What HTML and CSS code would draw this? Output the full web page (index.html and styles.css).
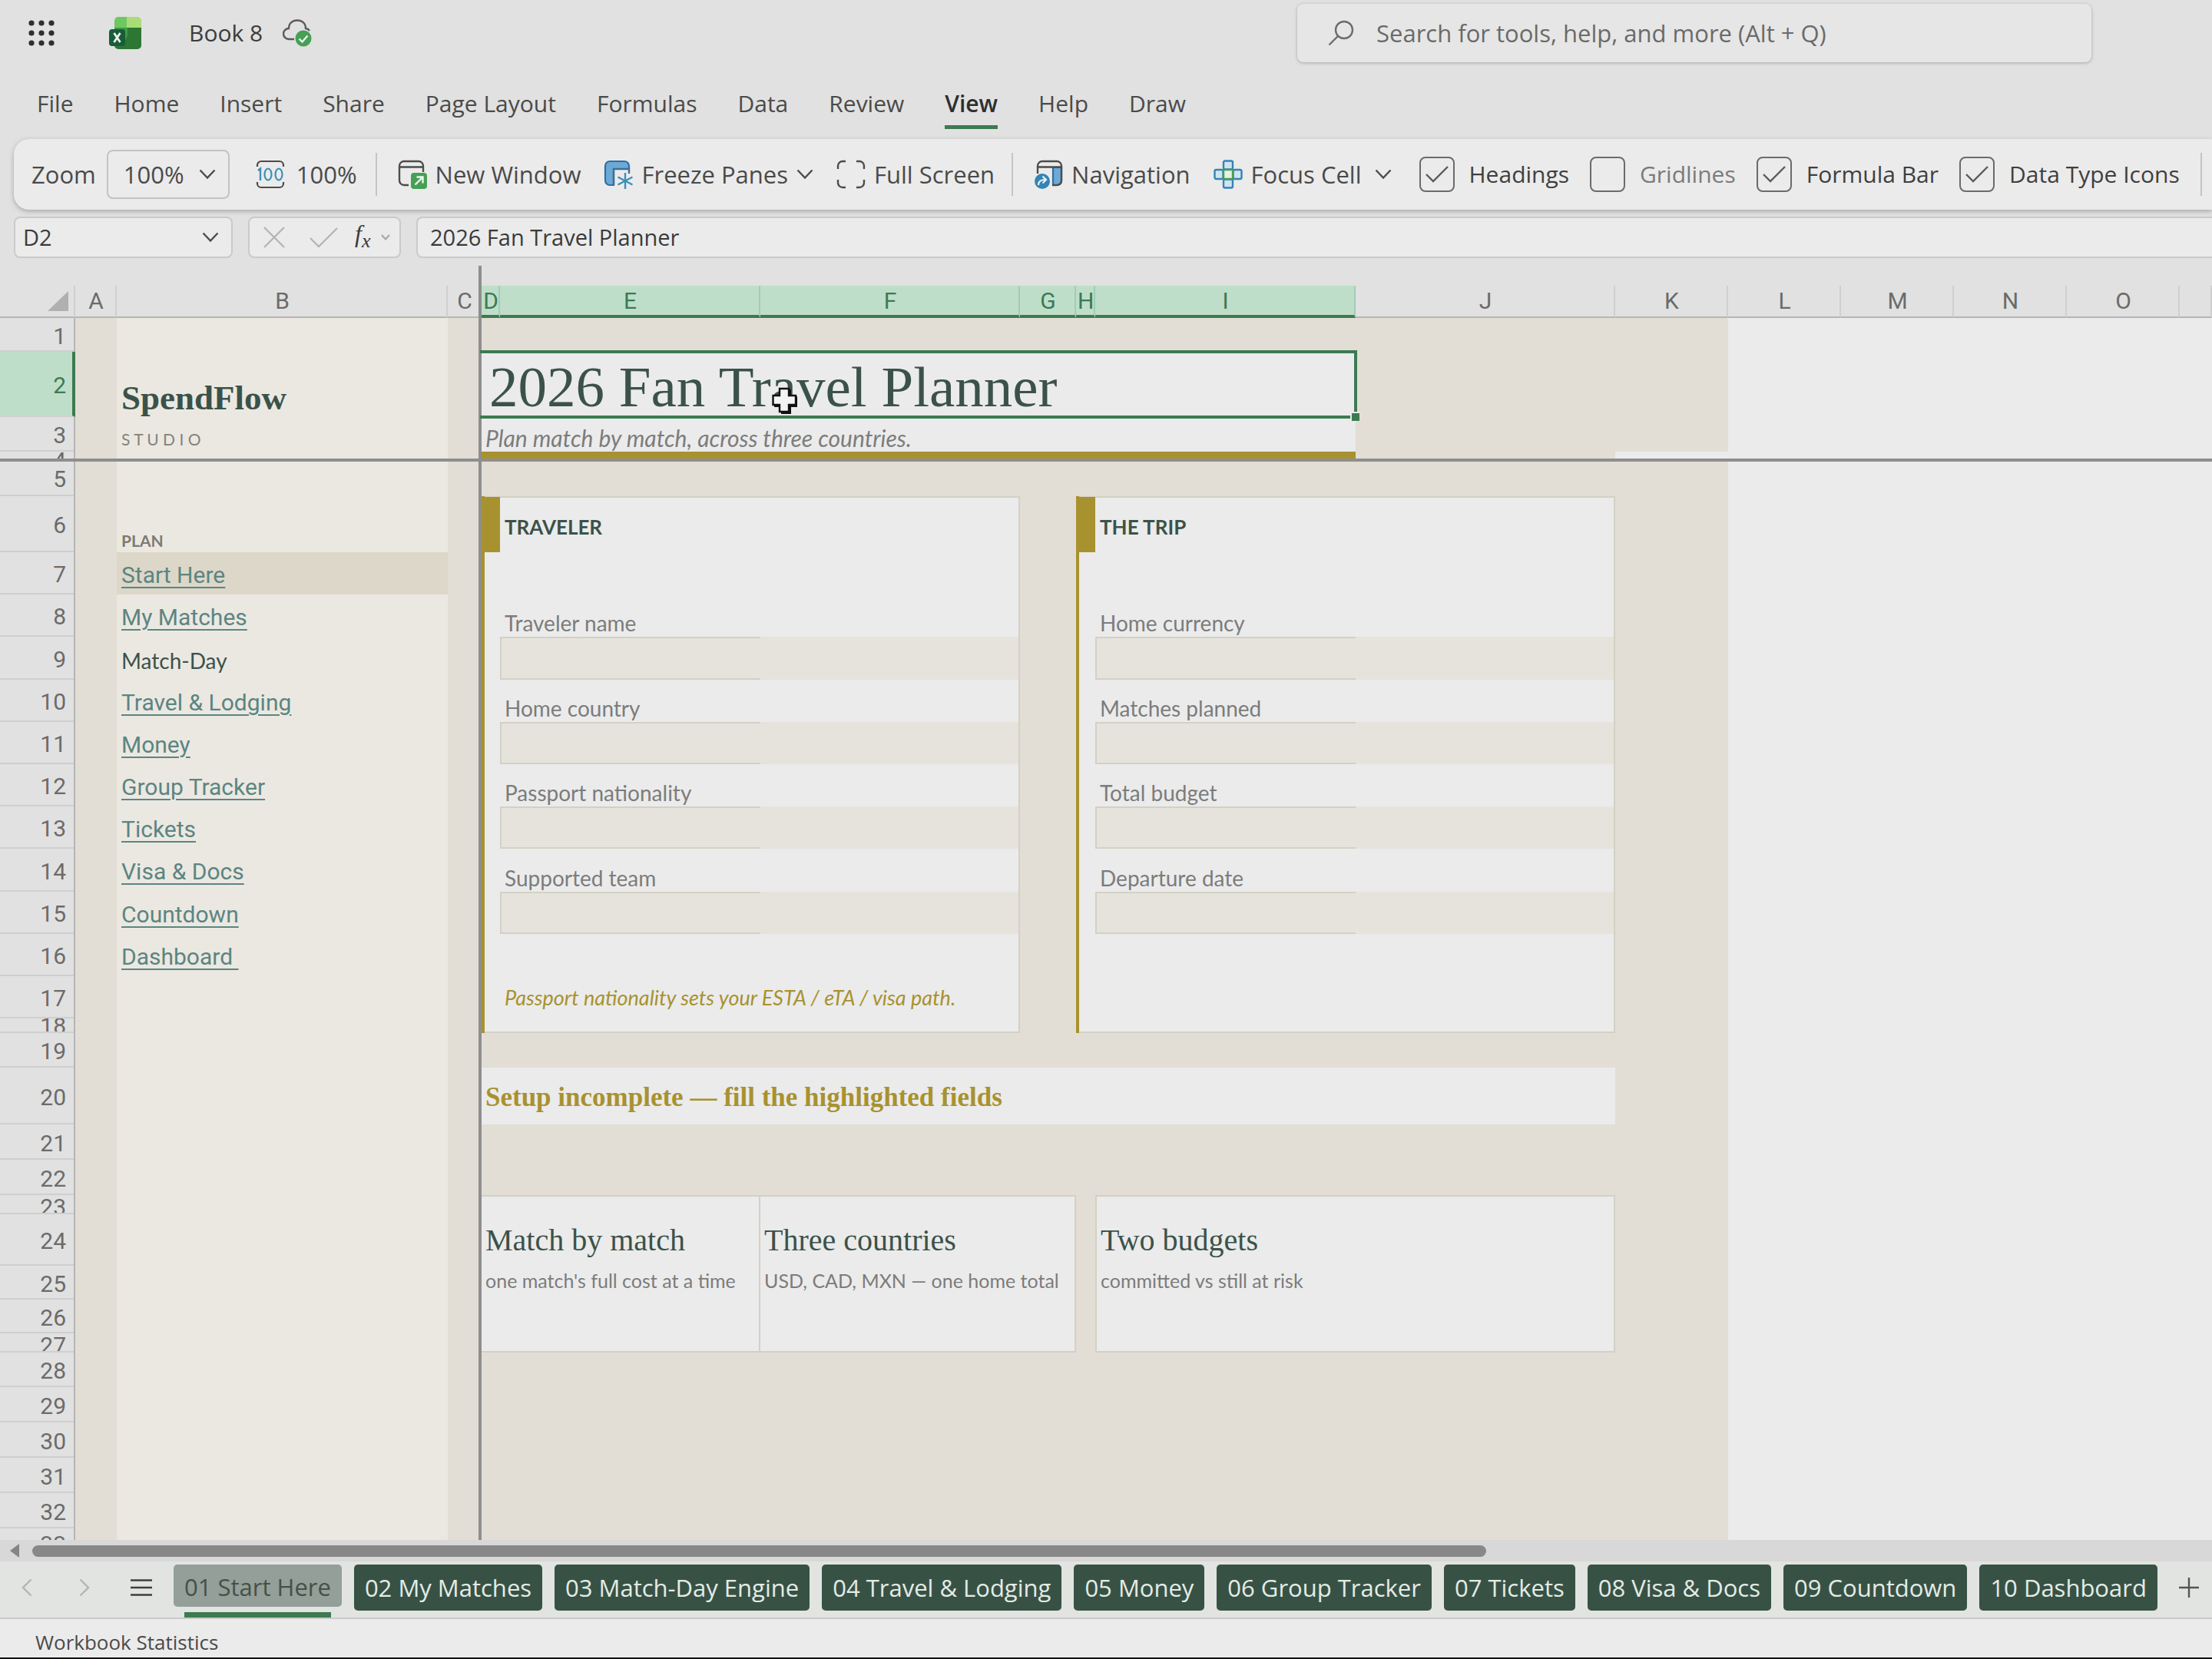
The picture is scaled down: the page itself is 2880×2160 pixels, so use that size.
FILE: index.html
```html
<!DOCTYPE html>
<html lang="en">
<head>
<meta charset="utf-8">
<title>Book 8</title>
<link rel="stylesheet" href="styles.css">
</head>
<body>
<header class="titlebar">
  <button class="plain launcher" aria-label="App launcher">
    <svg width="34" height="34" viewBox="0 0 34 34" fill="#2f2f2f"><circle cx="4" cy="4" r="3.6"/><circle cx="17" cy="4" r="3.6"/><circle cx="30" cy="4" r="3.6"/><circle cx="4" cy="17" r="3.6"/><circle cx="17" cy="17" r="3.6"/><circle cx="30" cy="17" r="3.6"/><circle cx="4" cy="30" r="3.6"/><circle cx="17" cy="30" r="3.6"/><circle cx="30" cy="30" r="3.6"/></svg>
  </button>
  <svg class="logo" width="42" height="42" viewBox="0 0 42 42"><path d="M12 0H36a6 6 0 0 1 6 6V15H7V5a5 5 0 0 1 5-5Z" fill="#6fc85f"/><path d="M23 0H36a6 6 0 0 1 6 6V14H23Z" fill="#a9de76"/><path d="M7 14H24V28H7Z" fill="#3f9a45"/><path d="M24 14H42V37a5 5 0 0 1-5 5H12a5 5 0 0 1-5-5V30H17a7 7 0 0 0 7-7Z" fill="#2c7733"/><rect y="16" width="21" height="22" rx="4" fill="#195c3a"/><path d="M6.500 21 14.500 33M14.500 21 6.500 33" stroke="#e8f2ea" stroke-width="2.800" fill="none"/></svg>
  <h1 class="filename">Book 8</h1>
  <svg class="cloud" width="38" height="36" viewBox="0 0 38 36"><path d="M15 26H8A7 7 0 0 1 8 12C8 5 13 1.500 19 1.500S30 5 30 12a7 7 0 0 1 5 3" fill="none" stroke="#5a5a5a" stroke-width="2.400"/><circle cx="27" cy="25" r="10.500" fill="#46a055"/><path d="M21.500 25.500 25.500 29.500 32.500 21.500" fill="none" stroke="#eef5ef" stroke-width="2.400"/></svg>
  <label class="search">
    <svg width="34" height="34" viewBox="0 0 34 34" fill="none" stroke="#6c6c6c" stroke-width="2.400"><circle cx="21" cy="13" r="11"/><path d="M13 21 1.500 32.500"/></svg>
    <input type="search" placeholder="Search for tools, help, and more (Alt + Q)" aria-label="Search">
  </label>
</header>

<nav class="menu">
  <button class="plain">File</button>
  <button class="plain">Home</button>
  <button class="plain">Insert</button>
  <button class="plain">Share</button>
  <button class="plain">Page Layout</button>
  <button class="plain">Formulas</button>
  <button class="plain">Data</button>
  <button class="plain">Review</button>
  <button class="plain current">View</button>
  <button class="plain">Help</button>
  <button class="plain">Draw</button>
</nav>

<section class="ribbon" aria-label="View tools">
  <label class="zoom-label" for="zoom">Zoom</label>
  <select id="zoom" class="zoom"><option>100%</option></select>
  <button class="plain tool zoom-reset">
    <svg width="38" height="38" viewBox="0 0 38 38" fill="none" stroke="#4c4c4c" stroke-width="2.200"><path d="M2 9V7a5 5 0 0 1 5-5H31a5 5 0 0 1 5 5V9M2 29v2a5 5 0 0 0 5 5H31a5 5 0 0 0 5-5V29"/><path stroke="#3d8fb8" stroke-width="2.400" d="M3 14 6 11.500V27"/><ellipse stroke="#3d8fb8" cx="16" cy="19" rx="4.500" ry="7.500"/><ellipse stroke="#3d8fb8" cx="30" cy="19" rx="4.500" ry="7.500"/></svg>
    100%
  </button>
  <span class="divider"></span>
  <button class="plain tool">
    <svg width="38" height="38" viewBox="0 0 38 38" fill="none" stroke="#4c4c4c" stroke-width="2.400"><path d="M14 33H8a6 6 0 0 1-6-6V8a6 6 0 0 1 6-6H27a6 6 0 0 1 6 6v8M2 9.500H33"/><rect x="17" y="17" width="21" height="21" rx="4" fill="#46a055" stroke="none"/><path d="M22.500 32.500 32 23M24.500 22.500H32.500V30.500" stroke="#edf5ee"/></svg>
    New Window
  </button>
  <button class="plain tool">
    <svg width="38" height="38" viewBox="0 0 38 38" fill="none"><path d="M8 2H27a6 6 0 0 1 6 6V12H13V33H8a6 6 0 0 1-6-6V8a6 6 0 0 1 6-6Z" fill="#6da9d6" stroke="#2f6fa5" stroke-width="2.200"/><path d="M13 33V12H33V18" stroke="#3c6f96" stroke-width="2.400"/><path d="M28 17V38M18.500 22.500 37.500 32.500M37.500 22.500 18.500 32.500" stroke="#3d8fb8" stroke-width="2.400"/></svg>
    Freeze Panes
    <svg class="chevron" width="22" height="14" viewBox="0 0 22 14"><path d="M1.500 1.500 11 11.500 20.500 1.500"/></svg>
  </button>
  <button class="plain tool group-end">
    <svg width="38" height="38" viewBox="0 0 38 38" fill="none" stroke="#4c4c4c" stroke-width="2.400"><path d="M2 12V8a6 6 0 0 1 6-6h4M26 2h4a6 6 0 0 1 6 6v4M36 26v4a6 6 0 0 1-6 6h-4M12 36H8a6 6 0 0 1-6-6V26"/></svg>
    Full Screen
  </button>
  <span class="divider"></span>
  <button class="plain tool">
    <svg width="38" height="38" viewBox="0 0 38 38" fill="none"><path d="M25 10H36V28a5 5 0 0 1-5 5H25Z" fill="#6da9d6" stroke="#2f6fa5" stroke-width="2.200"/><path d="M5 18V8a6 6 0 0 1 6-6H30a6 6 0 0 1 6 6V27a6 6 0 0 1-6 6H24M5 9.500H36" stroke="#4c4c4c" stroke-width="2.400"/><circle cx="11" cy="28" r="10" fill="#3484b5"/><path d="M6 33C6 28 9 26 15 26M11.500 21.500 16 26 11.500 30.500" stroke="#e9f2f8" stroke-width="2.200"/></svg>
    Navigation
  </button>
  <button class="plain tool focus">
    <svg width="38" height="38" viewBox="0 0 38 38" stroke-width="2.400" stroke="#3484b5" fill="#cfe4f0"><rect x="13" y="1.500" width="12" height="11" rx="2"/><rect x="13" y="25.500" width="12" height="11" rx="2"/><rect x="1.500" y="13" width="11" height="12" rx="2"/><rect x="25.500" y="13" width="11" height="12" rx="2"/><rect x="13" y="13" width="12" height="12" stroke="#469d54" fill="#e4f1e6"/></svg>
    Focus Cell
    <svg class="chevron wide" width="22" height="14" viewBox="0 0 22 14"><path d="M1.500 1.500 11 11.500 20.500 1.500"/></svg>
  </button>
  <label class="check"><input type="checkbox" checked>Headings</label>
  <label class="check muted"><input type="checkbox">Gridlines</label>
  <label class="check"><input type="checkbox" checked>Formula Bar</label>
  <label class="check"><input type="checkbox" checked>Data Type Icons</label>
  <span class="divider"></span>
</section>

<section class="formula-row">
  <div class="field name-box">
    <input value="D2" aria-label="Name box">
    <svg class="chevron" width="22" height="14" viewBox="0 0 22 14"><path d="M1.500 1.500 11 11.500 20.500 1.500"/></svg>
  </div>
  <div class="field fx-box">
    <button class="plain" aria-label="Cancel"><svg width="28" height="28" viewBox="0 0 28 28" fill="none" stroke="#b3b3b3" stroke-width="2.200"><path d="M1 1 27 27M27 1 1 27"/></svg></button>
    <button class="plain" aria-label="Enter"><svg width="37" height="28" viewBox="0 0 37 28" fill="none" stroke="#b3b3b3" stroke-width="2.200"><path d="M1 15 12 26 36 2"/></svg></button>
    <button class="plain fx" aria-label="Insert function"><i>f<sub>x</sub></i><svg width="12" height="8" viewBox="0 0 12 8" fill="none" stroke="#a5a5a5" stroke-width="2"><path d="M1 1 6 6.500 11 1"/></svg></button>
  </div>
  <input class="field formula" value="2026 Fan Travel Planner" aria-label="Formula bar">
</section>

<main class="sheet">
  <div class="paper"></div>
  <div class="unfilled"></div>

  <div class="columns">
    <span class="corner"><svg width="27" height="26" viewBox="0 0 27 26"><path d="M27 0V26H0Z" fill="#b0b0b0"/></svg></span>
    <span>A</span><span>B</span><span>C</span><span class="on">D</span><span class="on">E</span><span class="on">F</span><span class="on">G</span><span class="on">H</span><span class="on">I</span><span>J</span><span>K</span><span>L</span><span>M</span><span>N</span><span>O</span><span></span>
  </div>
  <div class="rows">
    <span>1</span><span class="on">2</span><span>3</span><span class="top sliver">4</span><span>5</span><span>6</span><span>7</span><span>8</span><span>9</span><span>10</span><span>11</span><span>12</span><span>13</span><span>14</span><span>15</span><span>16</span><span>17</span><span class="short">18</span><span>19</span><span>20</span><span>21</span><span>22</span><span class="top">23</span><span>24</span><span>25</span><span>26</span><span class="top">27</span><span>28</span><span>29</span><span>30</span><span>31</span><span>32</span><span class="top last">33</span>
  </div>

  <nav class="sidebar">
    <div class="brand">SpendFlow</div>
    <div class="studio">S T U D I O</div>
    <div class="group">PLAN</div>
    <div class="links">
      <div class="item here"><a href="#start">Start Here</a></div>
      <div class="item"><a href="#matches">My Matches</a></div>
      <div class="item plain-text">Match-Day</div>
      <div class="item"><a href="#travel">Travel &amp; Lodging</a></div>
      <div class="item"><a href="#money">Money</a></div>
      <div class="item"><a href="#group">Group Tracker</a></div>
      <div class="item"><a href="#tickets">Tickets</a></div>
      <div class="item"><a href="#visa">Visa &amp; Docs</a></div>
      <div class="item"><a href="#countdown">Countdown</a></div>
      <div class="item"><a href="#dashboard">Dashboard&nbsp;</a></div>
    </div>
  </nav>

  <h2 class="title">2026 Fan Travel Planner</h2>
  <p class="subtitle">Plan match by match, across three countries.</p>
  <div class="rule"></div>
  <div class="selection"><span class="handle"></span>
    <svg class="pointer" width="34" height="36" viewBox="0 0 34 36"><path d="M12 3H25V12H33V26H25V35H12V26H3V12H12Z" fill="#111"/><path d="M10 2H22V11H31V23H22V32H10V23H1.500V11H10Z" fill="#f4f4f4" stroke="#111" stroke-width="2.400"/></svg>
  </div>

  <section class="card traveler">
    <span class="tag"></span>
    <h3>TRAVELER</h3>
    <div class="entry"><label for="name">Traveler name</label><input id="name"><span class="spill"></span></div>
    <div class="entry"><label for="country">Home country</label><input id="country"><span class="spill"></span></div>
    <div class="entry"><label for="passport">Passport nationality</label><input id="passport"><span class="spill"></span></div>
    <div class="entry"><label for="team">Supported team</label><input id="team"><span class="spill"></span></div>
    <p class="note">Passport nationality sets your ESTA / eTA / visa path.</p>
  </section>
  <section class="card trip">
    <span class="tag"></span>
    <h3>THE TRIP</h3>
    <div class="entry"><label for="currency">Home currency</label><input id="currency"><span class="spill"></span></div>
    <div class="entry"><label for="planned">Matches planned</label><input id="planned"><span class="spill"></span></div>
    <div class="entry"><label for="budget">Total budget</label><input id="budget"><span class="spill"></span></div>
    <div class="entry"><label for="departure">Departure date</label><input id="departure"><span class="spill"></span></div>
  </section>

  <p class="status">Setup incomplete — fill the highlighted fields</p>

  <article class="feature first"><h3>Match by match</h3><p>one match's full cost at a time</p></article>
  <article class="feature second"><h3>Three countries</h3><p>USD, CAD, MXN — one home total</p></article>
  <article class="feature third"><h3>Two budgets</h3><p>committed vs still at risk</p></article>

  <div class="freeze-x"></div>
  <div class="freeze-y"></div>
</main>

<div class="scrollbar">
  <svg width="14" height="20" viewBox="0 0 14 20"><path d="M13 1V19L1 10Z" fill="#858585"/></svg>
  <div class="thumb"></div>
</div>

<nav class="tabs">
  <button class="plain arrow" aria-label="Previous"><svg width="14" height="24" viewBox="0 0 14 24"><path d="M12.500 1.500 2 12 12.500 22.500"/></svg></button>
  <button class="plain arrow" aria-label="Next"><svg width="14" height="24" viewBox="0 0 14 24"><path d="M1.500 1.500 12 12 1.500 22.500"/></svg></button>
  <button class="plain list" aria-label="All sheets"><svg width="28" height="24" viewBox="0 0 28 24"><path d="M0 2.500H28M0 12H28M0 21.500H28" stroke="#3f3f3f" stroke-width="2.600"/></svg></button>
  <button class="tab active">01 Start Here</button>
  <button class="tab">02 My Matches</button>
  <button class="tab">03 Match-Day Engine</button>
  <button class="tab">04 Travel &amp; Lodging</button>
  <button class="tab">05 Money</button>
  <button class="tab">06 Group Tracker</button>
  <button class="tab">07 Tickets</button>
  <button class="tab">08 Visa &amp; Docs</button>
  <button class="tab">09 Countdown</button>
  <button class="tab">10 Dashboard</button>
  <button class="plain add" aria-label="Add sheet"><svg width="26" height="26" viewBox="0 0 26 26"><path d="M13 0V26M0 13H26" stroke="#555" stroke-width="2.400"/></svg></button>
</nav>
<footer class="statusbar">Workbook Statistics</footer>
</body>
</html>
```
FILE: styles.css
```css
:root {
  --chrome: #e1e1e1;
  --surface: #ebebeb;
  --paper: #e2ded5;
  --sidebar: #ebe8e2;
  --line: #d3d0c5;
  --entry: #e6e3dd;
  --gold: #a8922f;
  --ink: #3b5249;
  --green: #3d7a52;
  --ui: "Open Sans", "Noto Sans", sans-serif;
  --cell: Lato, "Open Sans", sans-serif;
  --serif: "Liberation Serif", serif;
}

* { box-sizing: border-box; }

body {
  margin: 0;
  height: 100vh;
  display: flex;
  flex-direction: column;
  overflow: hidden;
  background: var(--chrome);
  color: #4a4a4a;
  font: 31px/40px var(--ui);
}

h1, h2, h3, p { margin: 0; font-weight: 400; }
input, select, button { font: inherit; color: inherit; }
svg { flex: none; }

.plain { padding: 0; border: 0; background: none; white-space: nowrap; }
.chevron { fill: none; stroke: #4c4c4c; stroke-width: 2.4; }

/* Title bar */
.titlebar { display: flex; flex: none; align-items: center; height: 86px; padding-left: 37px; }
.launcher { display: flex; margin-right: 71px; }
.filename { margin: 0 26px 0 62px; font-size: 30px; color: #3c3c3c; }
.search {
  display: flex;
  align-items: center;
  gap: 29px;
  width: 1034px;
  height: 76px;
  margin: 0 157px 0 auto;
  padding: 0 40px;
  border-radius: 8px;
  background: #e6e6e6;
  box-shadow: 0 1px 4px #a9a9a9;
}
.search input { flex: 1; border: 0; padding: 0; outline: 0; background: none; }
.search input::placeholder { color: #6a6a6a; opacity: 1; }

/* Menu */
.menu { display: flex; flex: none; gap: 53px; height: 95px; padding: 28px 0 0 48px; font-size: 30px; }
.menu .plain { height: 54px; padding-bottom: 8px; border-bottom: 5px solid transparent; }
.menu .current { font-weight: 600; color: #2e2e2e; border-color: var(--green); }

/* Ribbon */
.ribbon {
  display: flex;
  flex: none;
  align-items: center;
  height: 92px;
  margin-left: 18px;
  padding-left: 23px;
  border-radius: 20px 0 0 20px;
  background: var(--surface);
  box-shadow: 0 2px 6px #a6a6a6;
  white-space: nowrap;
  overflow: clip;
  overflow-clip-margin: 12px;
}
.zoom-label { margin-right: 14px; }
.zoom {
  appearance: none;
  flex: none;
  width: 160px;
  height: 64px;
  padding: 0 20px;
  border: 2px solid #c3c3c3;
  border-radius: 8px;
  background: url("data:image/svg+xml,%3Csvg xmlns='http://www.w3.org/2000/svg' width='22' height='14'%3E%3Cpath d='M1.5 1.5 11 11.500 20.500 1.500' fill='none' stroke='%234c4c4c' stroke-width='2.400'/%3E%3C/svg%3E") no-repeat right 16px center;
}
.tool { display: flex; flex: none; align-items: center; gap: 11px; margin-right: 30px; }
.zoom-reset { margin: 0 24px 0 34px; gap: 15px; }
.group-end { margin-right: 22px; }
.focus { margin-right: 36px; }
.tool .wide { margin-left: 6px; }
.divider { flex: none; width: 2px; height: 56px; margin-right: 27px; background: #c4c4c4; }
.check { display: flex; flex: none; align-items: center; gap: 19px; margin-right: 27px; color: #3f3f3f; font-size: 30px; line-height: 46px; }
.check input {
  appearance: none;
  width: 46px;
  height: 46px;
  margin: 0;
  border: 2px solid #6b6b6b;
  border-radius: 8px;
}
.check input:checked {
  background: url("data:image/svg+xml,%3Csvg xmlns='http://www.w3.org/2000/svg' width='30' height='22'%3E%3Cpath d='M1 11 10 20 29 1' fill='none' stroke='%235a5a5a' stroke-width='2.400'/%3E%3C/svg%3E") no-repeat center;
}
.check.muted { color: #7b7b7b; }

/* Formula row */
.formula-row { display: flex; flex: none; gap: 20px; margin: 9px 0 0 18px; height: 54px; }
.field {
  display: flex;
  align-items: center;
  border: 2px solid #cacaca;
  border-radius: 8px;
  background: var(--surface);
  color: #3a3a3a;
}
.name-box { width: 285px; padding: 0 16px 0 10px; }
.name-box input { flex: 1; min-width: 0; padding: 0; border: 0; background: none; font-size: 29px; }
.fx-box { width: 199px; padding-left: 18px; gap: 32px; }
.fx-box .plain { display: flex; align-items: center; }
.fx-box .fx { gap: 14px; font: 32px/32px var(--serif); margin-left: -10px; }
.fx sub { font-size: 26px; }
.formula { flex: 1; padding: 0 16px; border-right: 0; border-radius: 8px 0 0 8px; font-size: 29px; }

/* Sheet */
.sheet {
  flex: 1;
  min-height: 0;
  display: grid;
  grid-template-columns: 98px 54px 431px 44px 24px 339px 338px 73px 25px 339px 338px repeat(5, 147px) minmax(0, 1fr);
  grid-template-rows:
    42px 44px 85px 45px 11px 47px 73px
    55px 55px 56px 55px 55px 55px 55px 56px 55px 55px 55px
    19px 45px 74px 46px 46px 25px 67px 44px 44px 25px
    45px repeat(4, 46px) minmax(0, 1fr);
  padding-top: 36px;
  background: linear-gradient(var(--chrome) 78px, var(--surface) 78px);
}
.paper { grid-area: 2 / 2 / -1 / 13; background: var(--paper); }
.unfilled { grid-area: 5 / 12; background: var(--surface); }

.columns, .rows { font: 30px/42px Roboto, sans-serif; color: #6b6b6b; }
.columns {
  grid-area: 1 / 1 / 2 / -1;
  display: grid;
  grid-template-columns: subgrid;
  line-height: 40px;
  text-align: center;
}
.columns span { height: 42px; padding-left: 2px; border-right: 2px solid #cfcfcf; border-bottom: 2px solid #b5b5b5; white-space: nowrap; }
.columns .on { background: #bfdeca; color: var(--green); border-color: #a3cdb2; border-bottom: 4px solid var(--green); }
.columns .corner { display: flex; align-items: center; justify-content: flex-end; padding-right: 7px; }
.rows {
  grid-area: 2 / 1 / -1 / 2;
  display: grid;
  grid-template-rows: subgrid;
  min-height: 0;
  background: var(--chrome);
  border-right: 2px solid #b5b5b5;
}
.rows span {
  display: flex;
  align-items: center;
  justify-content: flex-end;
  min-height: 0;
  padding: 5px 10px 0 0;
  border-bottom: 2px solid #cfcfcf;
  overflow: hidden;
}
.rows .top { align-items: flex-start; padding-top: 0; line-height: 32px; }
.rows .sliver { line-height: 24px; }
.rows .last { line-height: 42px; border-bottom: 0; }
.rows .short { padding-top: 2px; }
.rows .on { background: #bfdeca; color: var(--green); margin-right: -2px; border-right: 4px solid var(--green); padding-right: 8px; }

.sidebar {
  grid-area: 2 / 3 / -1 / 4;
  display: grid;
  grid-template-rows: subgrid;
  min-height: 0;
  background: var(--sidebar);
  white-space: nowrap;
}
.brand, .studio, .group, .item { padding-left: 6px; }
.brand { grid-row: 2; align-self: end; font: bold 45px/50px var(--serif); color: var(--ink); }
.studio { grid-row: 3; align-self: end; font: 21px/32px var(--cell); color: #85827a; }
.group { grid-row: 6; align-self: end; font: bold 21px/30px var(--cell); color: #7d7a72; }
.links { grid-row: 7 / 17; display: grid; grid-template-rows: subgrid; }
.item { display: flex; align-items: center; padding-top: 4px; font: 30px/36px Roboto, sans-serif; }
.item a { color: #5c8581; text-underline-offset: 5px; text-decoration-thickness: 2px; }
.here { background: #dcd7c9; }
.plain-text { padding-top: 6px; font: 28px/36px var(--cell); color: var(--ink); }

.title {
  grid-area: 3 / 5 / 4 / 11;
  padding-left: 10px;
  background: var(--surface);
  color: var(--ink);
  font: 75px/92px var(--serif);
  height: 85px;
  white-space: nowrap;
}
.subtitle {
  grid-area: 4 / 5 / 5 / 11;
  padding: 10px 0 0 5px;
  background: var(--surface);
  color: #7c7c7c;
  font: italic 30px/34px var(--cell);
}
.rule { grid-area: 5 / 5 / 6 / 11; background: var(--gold); }
.selection {
  grid-area: 3 / 5 / 4 / 11;
  position: relative;
  margin: -2px;
  border: 4px solid var(--green);
  border-left: 0;
}
.handle {
  position: absolute;
  right: -7px;
  bottom: -7px;
  width: 12px;
  height: 12px;
  border: 2px solid var(--surface);
  border-width: 2px 0 0 2px;
  background: var(--green);
}
.pointer { position: absolute; left: 380px; top: 44px; }

/* Entry cards */
.card, .entry {
  display: grid;
  grid-template-columns: subgrid;
  grid-template-rows: subgrid;
}
.card {
  background:
    linear-gradient(var(--gold) 0 0) left / 4px 100% no-repeat,
    linear-gradient(var(--line) 0 0) top / 100% 2px no-repeat,
    linear-gradient(var(--line) 0 0) bottom / 100% 2px no-repeat,
    linear-gradient(var(--line) 0 0) right / 2px 100% no-repeat,
    var(--surface);
}
.traveler { grid-area: 7 / 5 / 20 / 8; }
.trip { grid-area: 7 / 9 / 20 / 12; }
.tag { grid-area: 1 / 1; margin-top: 1px; background: var(--gold); }
.card h3 { grid-area: 1 / 2; align-self: center; padding: 6px 0 0 6px; font: bold 26px/34px var(--cell); color: var(--ink); }
.entry { grid-column: 2 / 4; }
.entry:nth-of-type(1) { grid-row: 3 / 5; }
.entry:nth-of-type(2) { grid-row: 5 / 7; }
.entry:nth-of-type(3) { grid-row: 7 / 9; }
.entry:nth-of-type(4) { grid-row: 9 / 11; }
.entry label { grid-area: 1 / 1; align-self: end; padding-left: 6px; font: 28px/36px var(--cell); color: #7c7c7c; }
.entry input {
  grid-area: 2 / 1;
  width: 100%;
  height: 100%;
  padding: 0 6px;
  border: 2px solid var(--line);
  border-right: 0;
  border-radius: 0;
  background: var(--entry);
}
.spill { grid-area: 2 / 2; margin-right: 2px; background: var(--entry); }
.note { grid-area: 12 / 2 / 13 / 4; align-self: center; padding-left: 6px; font: italic 27px/34px var(--cell); color: var(--gold); }

.status {
  grid-area: 21 / 5 / 22 / 12;
  height: 74px;
  padding-left: 5px;
  background: var(--surface);
  color: var(--gold);
  font: bold 35px/78px var(--serif);
}

/* Feature cards */
.feature {
  grid-row: 24 / 29;
  display: grid;
  grid-template-rows: subgrid;
  background: var(--surface);
  border: 2px solid var(--line);
  border-width: 2px 2px 2px 0;
  padding-left: 5px;
  white-space: nowrap;
}
.first { grid-column: 5 / 7; }
.second { grid-column: 7 / 9; }
.third { grid-column: 10 / 12; border-left-width: 2px; }
.feature h3 { grid-row: 2; font: 40px/67px var(--serif); color: var(--ink); }
.feature p { grid-row: 3; font: 25px/38px var(--cell); color: #7c7c7c; }

.freeze-y { grid-area: 1 / 4 / -1 / 5; margin-top: -26px; border-right: 4px solid #8e8e8e; }
.freeze-x { grid-area: 5 / 1 / 6 / -1; margin-bottom: -2px; border-bottom: 4px solid #8e8e8e; }

/* Bottom bars */
.scrollbar { display: flex; flex: none; align-items: center; gap: 16px; height: 28px; padding-left: 12px; background: #d8d8d8; }
.thumb { width: 66%; height: 15px; border-radius: 8px; background: #888; }

.tabs { display: flex; flex: none; align-items: flex-start; gap: 16px; height: 75px; padding: 4px 0 0 28px; border-bottom: 2px solid #cacaca; background: #e2e4e2; white-space: nowrap; }
.tabs svg { display: block; fill: none; stroke: #b3b3b3; stroke-width: 2.4; }
.tabs .plain { height: 60px; }
.arrow { margin-right: 45px; }
.list { margin: 0 12px 0 -8px; }
.tab { position: relative; height: 60px; padding: 0 14px; border: 0; border-radius: 5px; background: #375245; color: #e4ebe6; }
.tab.active { height: 55px; padding-top: 3px; background: #939f98; color: #46504a; }
.tab.active::after { content: ""; position: absolute; left: 14px; right: 14px; bottom: -14px; height: 7px; background: var(--green); }
.tabs .add { margin-left: 12px; }

.statusbar { flex: none; height: 52px; padding-left: 46px; border-bottom: 2px solid #111; background: var(--surface); font-size: 26px; line-height: 60px; }
```
